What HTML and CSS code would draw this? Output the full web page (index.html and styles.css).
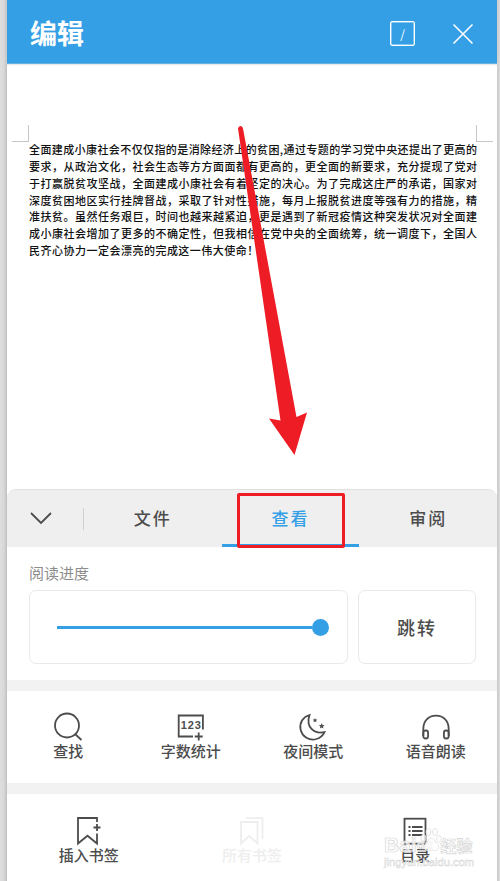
FILE: index.html
```html
<!DOCTYPE html>
<html lang="zh-CN">
<head>
    <meta charset="UTF-8">
    <title>编辑</title>
    <link rel="stylesheet" href="styles.css">
</head>
<body>
<div class="screen">
    <header class="topbar">
        <h1>编辑</h1>
        <button class="pages">/</button>
        <button class="close">
            <svg width="22" height="22" viewBox="0 0 22 22"><path d="M1.500 1.500 20.500 20.500M20.500 1.500 1.500 20.500"/></svg>
        </button>
    </header>

    <main class="document">
        <div class="margins"><i class="left"></i><i class="right"></i></div>
        <div class="text">
            <p>全面建成小康社会不仅仅指的是消除经济上的贫困,通过专题的学习党中央还提出了更高的</p>
            <p>要求，从政治文化，社会生态等方方面面都有更高的，更全面的新要求，充分提现了党对</p>
            <p>于打赢脱贫攻坚战，全面建成小康社会有着坚定的决心。为了完成这庄严的承诺，国家对</p>
            <p>深度贫困地区实行挂牌督战，采取了针对性措施，每月上报脱贫进度等强有力的措施，精</p>
            <p>准扶贫。虽然任务艰巨，时间也越来越紧迫，更是遇到了新冠疫情这种突发状况对全面建</p>
            <p>成小康社会增加了更多的不确定性，但我相信在党中央的全面统筹，统一调度下，全国人</p>
            <p class="last">民齐心协力一定会漂亮的完成这一伟大使命！</p>
        </div>
    </main>

    <section class="panel">
        <nav class="tabs">
            <button class="collapse">
                <svg width="22" height="13" viewBox="0 0 22 13"><path d="M1 1 11 11 21 1"/></svg>
            </button>
            <a class="tab">文件</a>
            <a class="tab active">查看<span class="highlight"></span></a>
            <a class="tab">审阅</a>
        </nav>

        <div class="progress">
            <h2>阅读进度</h2>
            <div class="progress-row">
                <div class="box slider"><span class="track"></span><span class="thumb"></span></div>
                <button class="box jump">跳转</button>
            </div>
        </div>

        <div class="tools four">
            <div class="tool">
                <svg viewBox="0 0 30 30"><circle cx="14" cy="13.500" r="12"/><path d="M22 22l6.500 6"/></svg>
                <span>查找</span>
            </div>
            <div class="tool">
                <svg viewBox="0 0 30 30">
                    <path d="M17 24.500H2.700V3.500h24.200V17.500M22.700 20.500v8M18.700 24.500h8"/>
                    <text x="4.800" y="17" textLength="20">123</text>
                </svg>
                <span>字数统计</span>
            </div>
            <div class="tool">
                <svg viewBox="0 0 30 30">
                    <path d="M11.500 3C4.500 5 1.500 11 2.500 17c1.500 8 9 12 16 10 4-1 6.500-3.500 8-6.800C16 22.500 7.500 15 11.500 3z"/>
                    <path class="solid" d="M17 6l.7 1.400 1.500.2-1.100 1.100.3 1.600-1.400-.8-1.400.8.300-1.600-1.100-1.100 1.500-.2zM23.700 11l.8 1.900 2 .2-1.500 1.400.5 2-1.800-1-1.800 1 .5-2-1.500-1.400 2-.2z"/>
                </svg>
                <span>夜间模式</span>
            </div>
            <div class="tool">
                <svg viewBox="0 0 30 30">
                    <path d="M2.300 24V17c0-8 5-13.300 12.700-13.300S27.700 9 27.700 17v7"/>
                    <rect x="2.300" y="18.500" width="4.800" height="8" rx="2.200"/><rect x="22.900" y="18.500" width="4.800" height="8" rx="2.200"/>
                </svg>
                <span>语音朗读</span>
            </div>
        </div>

        <div class="tools three">
            <div class="tool">
                <svg viewBox="0 0 30 30"><path d="M23 6V2H4v25.500l9.500-7.800L23 27.500V17.500M23 8v7M19.500 11.500h7"/></svg>
                <span>插入书签</span>
            </div>
            <div class="tool disabled">
                <svg viewBox="0 0 30 30"><path d="M4 6h16.500V27.500L12.200 20 4 27.500zM9 2.200h16.500v21"/></svg>
                <span>所有书签</span>
            </div>
            <div class="tool contents">
                <svg viewBox="0 0 30 30">
                    <rect x="4.500" y="2.700" width="21" height="25"/>
                    <path d="M12 11h10.500M12 15h10.500M12 19h10.500M8.500 11h2M8.500 15h2M8.500 19h2"/>
                </svg>
                <span>目录</span>
            </div>
        </div>
    </section>

    <svg class="arrow" width="70" height="330" viewBox="0 0 70 330">
        <path d="M8 3.500Q8.500 1 10.500 1T13 3.500L66.500 292 77 287.500 64.500 330 39 293.500 50.500 295.500z" transform="translate(-7)"/>
    </svg>

    <div class="watermark">
        <svg width="22" height="25" viewBox="0 0 22 25">
            <ellipse cx="3.500" cy="11" rx="2.500" ry="3.500"/><ellipse cx="8.500" cy="5" rx="2.500" ry="3.500"/>
            <ellipse cx="15" cy="5" rx="2.500" ry="3.500"/><ellipse cx="19" cy="12" rx="2.500" ry="3.300"/>
            <path d="M11.500 11c3 0 3 4 6 6.500 3 3.500 0 6.500-3 6-2-.5-4-.5-6 0-4 .5-6-3-3-6 3-2.500 3-6.500 6-6.500z"/>
        </svg>
        <div class="brand"><b>Bai</b><b class="du">du</b><b class="cn">经验</b></div>
        <div class="site">jingyan.baidu.com</div>
    </div>
</div>
</body>
</html>
```
FILE: styles.css
```css
* {
    box-sizing: border-box;
}
body {
    margin: 0;
    height: 881px;
    overflow: hidden;
    padding: 0 3px 0 7px;
    background: linear-gradient(90deg, #dedede 0, #d8d8d8 4px, #bfbfbf 7px, #c8c8c8 497px, #dcdcdc 500px);
    font-family: "Noto Sans CJK SC", sans-serif;
    color: #4c4c4c;
}
h1, h2, p {
    margin: 0;
}
button {
    border: 0;
    padding: 0;
    background: none;
    color: inherit;
    font-family: inherit;
}
svg {
    fill: none;
    stroke: currentColor;
}
.screen {
    position: relative;
    display: flex;
    flex-direction: column;
    height: 881px;
    background: #fff;
}
.topbar {
    display: flex;
    align-items: center;
    height: 64px;
    padding: 4px 23px 0 23px;
    background: #349fe5;
    border-bottom: 1px solid #69afe0;
    box-shadow: 0 1px 1px #e8e8e8;
    color: #fff;
}
.topbar h1 {
    flex: 1;
    font-size: 27px;
    line-height: 38px;
    padding-bottom: 2px;
    font-weight: 700;
}
.pages {
    width: 25px;
    height: 25px;
    border: 1px solid #fff;
    border-radius: 2px;
    box-shadow: inset 0 0 0 .5px #d6ecfa;
    font-size: 12px;
    line-height: 18px;
}
.close {
    display: flex;
    margin-left: 37px;
}
.close svg {
    stroke-width: 1.600;
}
.document {
    flex: 1;
    padding-top: 61px;
}
.margins {
    display: flex;
    justify-content: space-between;
    padding: 0 4px 0 5px;
}
.margins i {
    width: 17px;
    height: 17px;
    border-bottom: 1px solid #c6c6c6;
}
.margins .left {
    border-right: 1px solid #c6c6c6;
}
.margins .right {
    border-left: 1px solid #c6c6c6;
}
.text {
    width: 448px;
    margin: -1px 0 0 22px;
    color: #111;
    font-size: 11px;
    font-weight: 500;
    line-height: 16.850px;
}
.text p {
    white-space: nowrap;
    text-align: justify;
    text-align-last: justify;
}
.text .last {
    text-align-last: left;
    letter-spacing: .49px;
}
.panel {
    height: 392px;
}
.tabs {
    display: flex;
    height: 58px;
    background: #efefef;
    border-top: 1px solid #e1e1e1;
    border-radius: 9px 9px 0 0;
}
.collapse {
    display: flex;
    align-items: center;
    width: 77px;
    padding-left: 23px;
    background: linear-gradient(#cfcfcf, #cfcfcf) right 18px / 1px 22px no-repeat;
}
.collapse svg {
    stroke-width: 1.800;
}
.tab {
    position: relative;
    flex: 1;
    padding-top: 1px;
    text-align: center;
    font-size: 17px;
    font-weight: 500;
    line-height: 54px;
    letter-spacing: 2px;
}
.tab.active {
    color: #349fe5;
    border-bottom: 3px solid #349fe5;
}
.highlight {
    position: absolute;
    left: 15px;
    top: 3px;
    width: 108px;
    height: 55px;
    border: 3px solid #ee1c25;
    border-radius: 2px;
}
.progress {
    height: 133px;
    padding: 15px 21px 0 22px;
}
.progress h2 {
    color: #8c8c8c;
    font-size: 15px;
    font-weight: 400;
    line-height: 22px;
}
.progress-row {
    display: flex;
    gap: 10px;
    margin-top: 6px;
    height: 74px;
}
.box {
    border: 1px solid #e9e9e9;
    border-radius: 7px;
}
.slider {
    display: flex;
    align-items: center;
    width: 319px;
    padding: 0 18px 0 27px;
}
.track {
    flex: 1;
    height: 3px;
    background: #349fe5;
}
.thumb {
    width: 17px;
    height: 17px;
    border-radius: 50%;
    background: #349fe5;
}
.jump {
    flex: 1;
    font-size: 18px;
    font-weight: 500;
    letter-spacing: 2px;
}
.tools {
    display: grid;
    border-top: 11px solid #f2f2f2;
}
.four {
    grid-template-columns: repeat(4, 1fr);
    height: 103px;
    padding-top: 21px;
}
.three {
    grid-template-columns: repeat(3, 1fr);
    height: 98px;
    padding-top: 22px;
}
.tool {
    display: flex;
    flex-direction: column;
    align-items: center;
    font-size: 15px;
    font-weight: 500;
    line-height: 18px;
}
.tool svg {
    width: 30px;
    height: 30px;
    stroke-width: 1.800;
}
.tool text {
    fill: currentColor;
    stroke: none;
    font: bold 11px "Liberation Sans", sans-serif;
}
.tool .solid {
    fill: currentColor;
    stroke: none;
}
.disabled {
    color: #eee;
}
.arrow {
    position: absolute;
    left: 230px;
    top: 125px;
    fill: #ee1c25;
    stroke: none;
}
.watermark {
    position: absolute;
    left: 377px;
    top: 833px;
    width: 92px;
    color: rgba(255, 255, 255, .8);
    font-family: "Liberation Sans", "Noto Sans CJK SC", sans-serif;
}
.watermark svg {
    position: absolute;
    left: 36px;
    top: -6px;
    fill: rgba(255, 255, 255, .6);
    stroke: #dedede;
    stroke-width: .8;
}
.brand {
    display: flex;
    align-items: center;
    height: 23px;
    font-size: 21px;
    -webkit-text-stroke: .7px #d6d6d6;
}
.brand .du {
    font-size: 13px;
}
.brand .cn {
    margin-left: 8px;
    font-size: 16px;
}
.site {
    font-size: 11.200px;
    line-height: 13px;
    -webkit-text-stroke: .5px #d6d6d6;
}
```
